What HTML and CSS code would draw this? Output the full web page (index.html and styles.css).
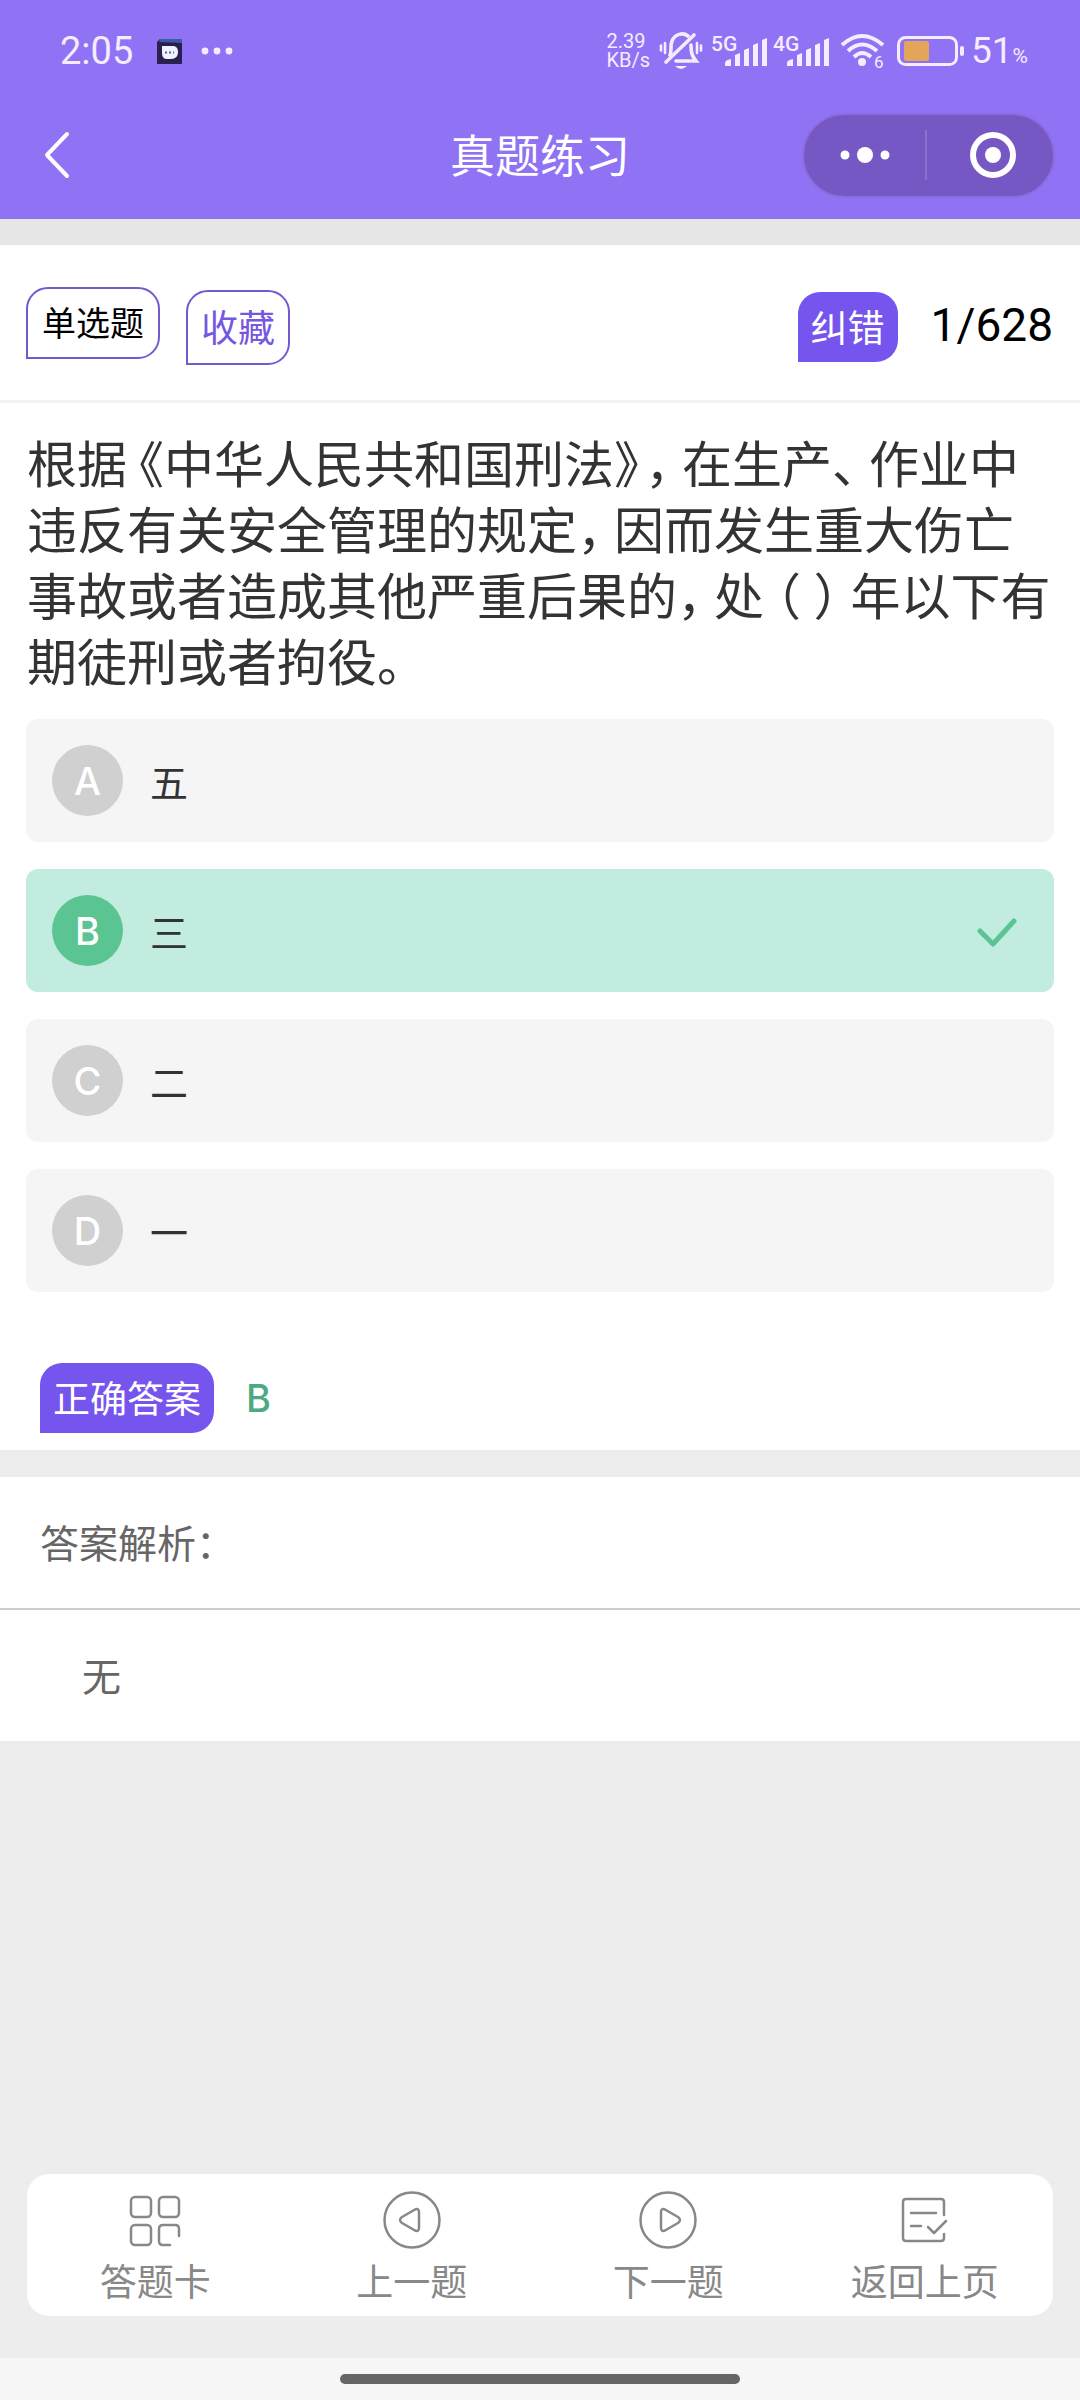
FILE: index.html
```html
<!DOCTYPE html>
<html lang="zh-CN">
<head>
<meta charset="utf-8">
<meta name="viewport" content="width=device-width, initial-scale=1">
<title>真题练习</title>
<link rel="stylesheet" href="styles.css">
</head>
<body>
<div class="page">
  <header class="header">
    <div class="status">
      <div class="status-left">
        <span class="status-number">2:05</span>
        <svg class="app-icon" width="25" height="25" viewBox="0 0 25 25" aria-hidden="true">
          <path d="M3 0H25V25H0V3Z" fill="#2a1f4f"/>
          <path d="M3 0H25V4L2 3Z" fill="#3d5aa8"/>
          <path d="M5 7H17Q21 8 21 13Q21 20 14 20H10Q5 20 5 14Z" fill="#eef4ff"/>
          <path d="M8 13.500h2m2 0h2m2 0h1" stroke="#5a6190" stroke-width="2"/>
        </svg>
        <svg class="status-dots" width="32" height="8" viewBox="0 0 32 8" fill="#f4ecff" aria-hidden="true">
          <circle cx="4" cy="4" r="3.400"/><circle cx="16" cy="4" r="3.400"/><circle cx="28" cy="4" r="3.400"/>
        </svg>
      </div>
      <div class="status-right">
        <span class="speed">2.39<br>KB/s</span>
        <svg class="bell" width="44" height="38" viewBox="0 0 44 38" fill="none" stroke="#f4ecff" stroke-width="3.600" stroke-linecap="round" aria-hidden="true">
          <path d="M2 13.500v5M6 11v10M38 11v10M42 13.500v5" stroke-width="2.600"/>
          <path d="M11 23c2-4 0-9 2-14C16 2 24 0 29 4"/>
          <path d="M32 13c0 8 1 11 5 16H17"/>
          <path d="M35 3L7 30"/>
          <path d="M16 34h12q-6 6-12 0z" fill="#f4ecff" stroke="none"/>
        </svg>
        <svg class="signal" width="56" height="34" viewBox="0 0 56 34" fill="#f4ecff" aria-hidden="true">
          <text x="0" y="17" class="signal-text">5G</text>
          <path d="M14 32v-3q0-3 6-4v7zM24 32V21l5-2v13zM33 32V16l5-2v18zM42 32V11l5-2v23zM51 32V6l5-2v28z"/>
        </svg>
        <svg class="signal" width="56" height="34" viewBox="0 0 56 34" fill="#f4ecff" aria-hidden="true">
          <text x="0" y="17" class="signal-text">4G</text>
          <path d="M14 32v-3q0-3 6-4v7zM24 32V21l5-2v13zM33 32V16l5-2v18zM42 32V11l5-2v23zM51 32V6l5-2v28z"/>
        </svg>
        <svg class="wifi" width="46" height="36" viewBox="0 0 46 36" fill="none" stroke="#f4ecff" stroke-width="4" aria-hidden="true">
          <path d="M2 12Q22-6 43 12M8 18Q22 5 37 18M14 24Q22 16 31 24"/>
          <circle cx="22" cy="29" r="4" fill="#f4ecff" stroke="none"/>
          <text x="34" y="35" class="wifi-text">6</text>
        </svg>
        <svg class="battery" width="67" height="30" viewBox="0 0 67 30" aria-hidden="true">
          <rect x="1.500" y="1.500" width="58" height="27" rx="7" fill="none" stroke="#f4ecff" stroke-width="3"/>
          <rect x="7" y="5" width="25" height="20" rx="2" fill="#e3a55a"/>
          <rect x="63" y="10" width="4" height="10" rx="2" fill="#f4ecff"/>
        </svg>
        <span class="charge"><span class="charge-number">51</span><span class="charge-unit">%</span></span>
      </div>
    </div>
    <nav class="navbar">
      <button class="back" type="button" aria-label="返回">
        <svg width="26" height="48" viewBox="0 0 26 48" fill="none" stroke="#fff" stroke-width="4" stroke-linecap="round" stroke-linejoin="round"><path d="M23 3L3 24L23 45"/></svg>
      </button>
      <h1 class="title">真题练习</h1>
      <div class="capsule">
        <button class="capsule-button" type="button" aria-label="更多">
          <svg width="50" height="18" viewBox="0 0 50 18" fill="#fff"><circle cx="5" cy="9" r="4.500"/><circle cx="25" cy="9" r="8"/><circle cx="45" cy="9" r="4.500"/></svg>
        </button>
        <button class="capsule-button capsule-close" type="button" aria-label="关闭">
          <svg width="48" height="48" viewBox="0 0 48 48"><circle cx="24" cy="24" r="20" fill="none" stroke="#fff" stroke-width="6"/><circle cx="24" cy="24" r="8" fill="#fff"/></svg>
        </button>
      </div>
    </nav>
  </header>

  <main class="main">
    <section class="card question-card">
      <div class="toolbar">
        <span class="tag tag-type">单选题</span>
        <button class="tag tag-action tag-outline" type="button">收藏</button>
        <button class="tag tag-action tag-solid tag-report" type="button">纠错</button>
        <span class="progress">1/628</span>
      </div>
      <form class="quiz">
        <p class="question" id="question">根据<span class="open">《</span>中华人民共和国刑法<span class="close close-tight">》</span><span class="close">，</span>在生产<span class="close">、</span>作业中违反有关安全管理的规定<span class="close">，</span>因而发生重大伤亡事故或者造成其他严重后果的<span class="close">，</span>处<span class="open">（</span> <span class="close">）</span>年以下有期徒刑或者拘役。</p>
        <div class="options" role="radiogroup" aria-labelledby="question">
          <label class="option"><input class="option-input" type="radio" name="answer" value="A"><span class="letter">A</span><span>五</span></label>
          <label class="option option-correct"><input class="option-input" type="radio" name="answer" value="B" checked><span class="letter">B</span><span>三</span>
            <svg class="check" width="42" height="32" viewBox="0 0 42 32" fill="none" stroke="#5ac592" stroke-width="5" stroke-linecap="round" stroke-linejoin="round" aria-hidden="true"><path d="M4 16L17 29L38 6"/></svg>
          </label>
          <label class="option"><input class="option-input" type="radio" name="answer" value="C"><span class="letter">C</span><span>二</span></label>
          <label class="option"><input class="option-input" type="radio" name="answer" value="D"><span class="letter">D</span><span>一</span></label>
        </div>
      </form>
      <div class="answer">
        <span class="tag tag-solid">正确答案</span>
        <span class="answer-letter">B</span>
      </div>
    </section>

    <section class="card analysis">
      <h2 class="analysis-title">答案解析：</h2>
      <p class="analysis-text">无</p>
    </section>
  </main>

  <nav class="tabs">
    <button class="tab" type="button">
      <svg class="tab-icon" viewBox="0 0 58 58"><rect x="5" y="6" width="20" height="20" rx="4"/><rect x="33" y="6" width="20" height="20" rx="4"/><rect x="5" y="34" width="20" height="20" rx="4"/><path d="M53 45V38Q53 34 49 34H37Q33 34 33 38V50Q33 54 37 54H44"/></svg>
      <span>答题卡</span>
    </button>
    <button class="tab" type="button">
      <svg class="tab-icon" viewBox="0 0 58 58"><circle cx="29" cy="29" r="27.500"/><path d="M32 18.500L19 26Q15 29 19 32L32 39.500Q36 41 36 37V21Q36 17 32 18.500Z"/></svg>
      <span>上一题</span>
    </button>
    <button class="tab" type="button">
      <svg class="tab-icon" viewBox="0 0 58 58"><circle cx="29" cy="29" r="27.500"/><path d="M26 18.500L39 26Q43 29 39 32L26 39.500Q22 41 22 37V21Q22 17 26 18.500Z"/></svg>
      <span>下一题</span>
    </button>
    <button class="tab" type="button">
      <svg class="tab-icon" viewBox="0 0 58 58"><path d="M48 24V11Q48 8 45 8H10Q7 8 7 11V47Q7 50 10 50H45Q48 50 48 47V43M15 22H40M15 35H25M32 36L38 42L50 30"/></svg>
      <span>返回上页</span>
    </button>
  </nav>
  <div class="home-bar"><span class="home-handle"></span></div>
</div>
</body>
</html>
```
FILE: styles.css
```css
* {
  box-sizing: border-box;
}

body {
  margin: 0;
  background: #ededed;
  color: #333;
  font-family: Roboto, "Noto Sans CJK SC", sans-serif;
}

button {
  margin: 0;
  padding: 0;
  border: 0;
  background: none;
  color: inherit;
  font: inherit;
}

h1,
h2,
p {
  margin: 0;
  font-weight: 400;
}

svg {
  display: block;
}

.page {
  display: flex;
  flex-direction: column;
  min-height: 100vh;
}

/* Header */

.header {
  background: #9072f5;
  color: #fff;
}

.status {
  display: flex;
  justify-content: space-between;
  align-items: center;
  height: 100px;
  padding: 2px 52px 0 60px;
  color: #f4ecff;
}

.status-left,
.status-right {
  display: flex;
  align-items: center;
}

.status-number {
  font-size: 38px;
  line-height: 44px;
}

.app-icon {
  margin-left: 24px;
}

.status-dots {
  margin-left: 19px;
}

.speed {
  font-size: 20px;
  line-height: 19px;
}

.bell {
  margin-left: 9px;
}

.signal {
  margin-left: 6px;
  overflow: visible;
}

.bell + .signal {
  margin-left: 8px;
}

.signal-text {
  font-size: 21px;
  font-weight: 500;
}

.wifi {
  margin-left: 11px;
  overflow: visible;
}

.wifi-text {
  font-size: 17px;
  fill: #f4ecff;
  stroke: none;
}

.battery {
  margin: 0 7px 0 11px;
}

.charge {
  display: flex;
  align-items: baseline;
}

.charge-number {
  font-size: 37px;
  line-height: 44px;
}

.charge-unit {
  font-size: 21px;
}

.navbar {
  display: grid;
  grid-template-columns: 1fr auto 1fr;
  align-items: center;
  height: 119px;
  padding: 0 25px 9px;
}

.back {
  justify-self: start;
  margin-left: 19px;
}

.title {
  padding-top: 5px;
  font-size: 45px;
  line-height: 60px;
}

.capsule {
  justify-self: end;
  display: flex;
  align-items: center;
  width: 253px;
  height: 85px;
  border: 2px solid #8a6fdc;
  border-radius: 43px;
  background: #7558c4;
}

.capsule-button {
  flex: 1;
  display: flex;
  align-items: center;
  justify-content: center;
  height: 50px;
}

.capsule-close {
  padding-left: 5px;
  border-left: 2px solid #8b72ce;
}

/* Cards */

.main {
  flex: 1;
  padding-top: 26px;
  background: linear-gradient(#e6e6e6 26px, transparent 26px);
}

.card {
  background: #fff;
}

.toolbar {
  display: flex;
  align-items: center;
  height: 158px;
  padding: 0 27px 0 26px;
  border-bottom: 3px solid #f2f2f2;
}

.tag {
  display: inline-flex;
  align-items: center;
  justify-content: center;
  border-radius: 22px 22px 22px 0;
  padding: 5px 13px 0;
  font-size: 37px;
  line-height: 54px;
}

.tag-type {
  height: 72px;
  padding: 3px 14px 0;
  border: 2px solid #7558d0;
  color: #000;
  font-size: 34px;
}

.tag-action {
  margin-top: 9px;
}

.tag-outline {
  height: 75px;
  margin-left: 26px;
  border: 2px solid #7558d0;
  color: #7558e0;
}

.tag-solid {
  height: 70px;
  background: #7655ee;
  color: #fff;
}

.tag-report {
  margin-left: auto;
}

.progress {
  margin-left: 33px;
  padding-top: 4px;
  color: #000;
  font-size: 46px;
  line-height: 56px;
}

.question {
  padding: 30px 20px 22px 27px;
  font-size: 50px;
  line-height: 66px;
  text-spacing-trim: space-all;
}

/* Half-width forms of the punctuation, with a little room on the blank side */
.open,
.close {
  font-feature-settings: "halt";
}

.open {
  margin-left: 12px;
}

.close {
  margin-right: 12px;
}

.close-tight {
  margin-right: 6px;
}

.options {
  display: grid;
  gap: 27px;
  padding: 0 26px;
}

.option {
  position: relative;
  display: flex;
  align-items: center;
  gap: 27px;
  height: 123px;
  padding: 0 36px 0 26px;
  border-radius: 12px;
  background: #f5f5f5;
  font-size: 38px;
}

.option-input {
  position: absolute;
  margin: 0;
  opacity: 0;
}

.letter {
  display: flex;
  align-items: center;
  justify-content: center;
  width: 71px;
  height: 71px;
  border-radius: 50%;
  background: #d0d0d0;
  color: #fff;
  font-family: Inter, sans-serif;
  font-weight: 500;
}

.option-correct {
  background: #c1ecdf;
}

.option-correct .letter {
  background: #5ac592;
}

.check {
  margin-left: auto;
}

.answer {
  display: flex;
  align-items: center;
  gap: 32px;
  padding: 71px 40px 17px;
}

.answer-letter {
  color: #4caa82;
  font-family: Inter, sans-serif;
  font-size: 38px;
  font-weight: 500;
}

.analysis {
  margin-top: 27px;
  color: #666;
  font-size: 39px;
  line-height: 57px;
}

.analysis-title {
  padding: 40px 40px 34px;
  border-bottom: 2px solid #ccc;
  font-size: inherit;
}

.analysis-text {
  padding: 40px 82px 34px;
}

/* Bottom navigation */

.tabs {
  display: grid;
  grid-template-columns: repeat(4, 1fr);
  margin: 0 27px 42px;
  padding: 17px 0 8px;
  border-radius: 22px;
  background: #fff;
}

.tab {
  display: flex;
  flex-direction: column;
  align-items: center;
  gap: 11px;
  color: #888;
  font-size: 37px;
  line-height: 48px;
}

.tab-icon {
  width: 58px;
  height: 58px;
  fill: none;
  stroke: #888;
  stroke-width: 2.5;
  stroke-linecap: round;
  stroke-linejoin: round;
}

.home-bar {
  display: flex;
  justify-content: center;
  height: 42px;
  padding-top: 16px;
  background: #f6f6f6;
}

.home-handle {
  width: 37%;
  height: 10px;
  border-radius: 5px;
  background: #666;
}
```
